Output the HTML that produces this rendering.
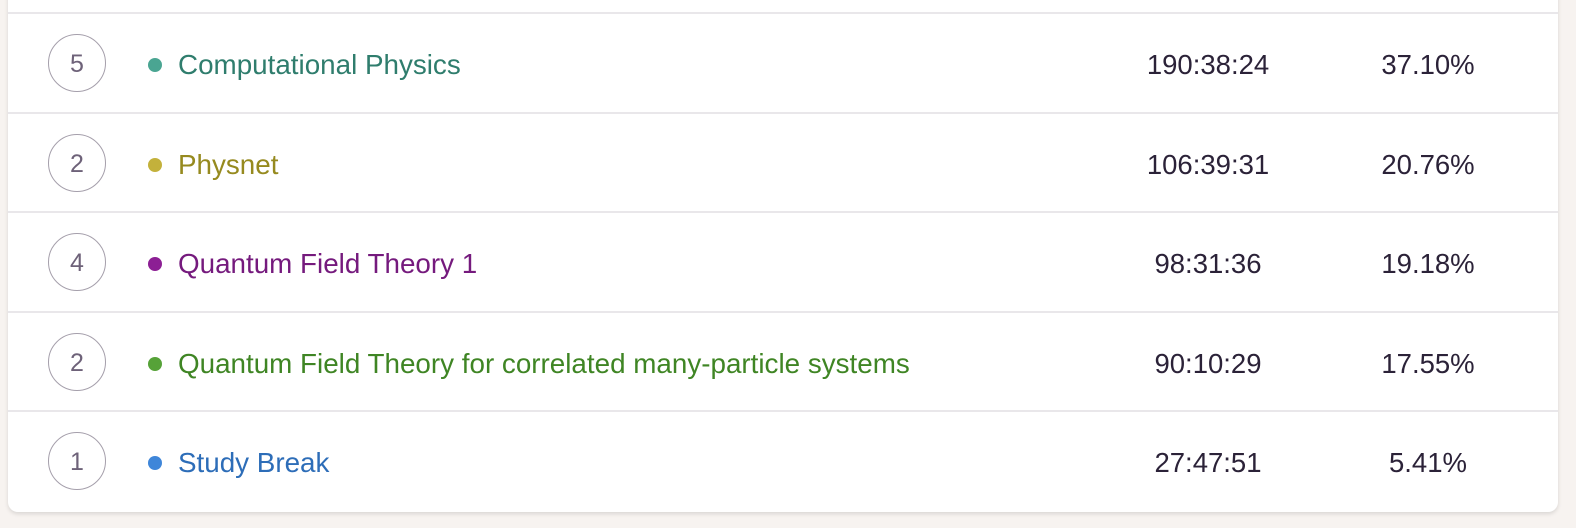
<!DOCTYPE html>
<html><head><style>
html,body{margin:0;padding:0;}
body{width:1576px;height:528px;background:#f7f3f0;font-family:"Liberation Sans",sans-serif;overflow:hidden;position:relative;}
.card{position:absolute;left:8px;top:-20px;width:1550px;height:532px;background:#fff;border-radius:10px;box-shadow:0 2px 4px rgba(0,0,0,0.12);}
.row{position:absolute;left:8px;width:1550px;height:98px;border-top:2px solid #e9e7ea;}
.c{position:absolute;left:40px;top:20px;width:58px;height:58px;border:1.5px solid #a59fab;border-radius:50%;display:flex;align-items:center;justify-content:center;font-size:25px;color:#6e6279;box-sizing:border-box;padding-top:3px;}
.d{position:absolute;left:140px;top:44px;width:14px;height:14px;border-radius:50%;}
.n{position:absolute;left:170px;top:34px;font-size:27.8px;line-height:34px;}
.t{position:absolute;left:1094px;width:212px;text-align:center;top:34px;font-size:27.5px;line-height:34px;color:#2b2238;}
.p{position:absolute;left:1314px;width:212px;text-align:center;top:34px;font-size:27.5px;line-height:34px;color:#2b2238;}
</style></head><body>
<div class="card"></div>
<div class="row" style="top:12px"><div class="c">5</div><div class="d" style="background:#4aa592"></div><div class="n" style="color:#2f7d6d">Computational Physics</div><div class="t">190:38:24</div><div class="p">37.10%</div></div>
<div class="row" style="top:112px"><div class="c">2</div><div class="d" style="background:#c3b13b"></div><div class="n" style="color:#968a1f">Physnet</div><div class="t">106:39:31</div><div class="p">20.76%</div></div>
<div class="row" style="top:211px"><div class="c">4</div><div class="d" style="background:#8c1f94"></div><div class="n" style="color:#751a7d">Quantum Field Theory 1</div><div class="t">98:31:36</div><div class="p">19.18%</div></div>
<div class="row" style="top:311px"><div class="c">2</div><div class="d" style="background:#56a238"></div><div class="n" style="color:#3f8524">Quantum Field Theory for correlated many-particle systems</div><div class="t">90:10:29</div><div class="p">17.55%</div></div>
<div class="row" style="top:410px"><div class="c">1</div><div class="d" style="background:#3f86d9"></div><div class="n" style="color:#2d6db8">Study Break</div><div class="t">27:47:51</div><div class="p">5.41%</div></div>
</body></html>
